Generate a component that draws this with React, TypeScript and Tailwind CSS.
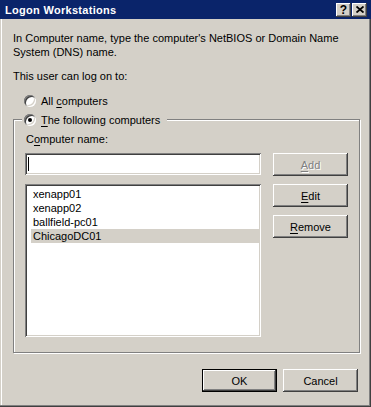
import React from 'react';

const raised =
  'shadow-[inset_-1px_-1px_0_#404040,inset_1px_1px_0_#ffffff,inset_-2px_-2px_0_#808080,inset_2px_2px_0_#d4d0c8]';
const sunken =
  'shadow-[inset_1px_1px_0_#808080,inset_-1px_-1px_0_#ffffff,inset_2px_2px_0_#404040,inset_-2px_-2px_0_#d4d0c8]';

function Radio({ checked }: { checked?: boolean }) {
  return (
    <span
      className={`flex h-[12px] w-[12px] shrink-0 items-center justify-center rounded-full bg-white ${sunken}`}
    >
      {checked && <span className="h-[4px] w-[4px] rounded-full bg-black" />}
    </span>
  );
}

// underlined access key
function Mn({ children }: { children: React.ReactNode }) {
  return <span className="underline underline-offset-[2px]">{children}</span>;
}

function Button({
  children,
  disabled,
  primary,
}: {
  children: React.ReactNode;
  disabled?: boolean;
  primary?: boolean;
}) {
  return (
    <div
      className={`flex h-[23px] w-[75px] items-center justify-center bg-[#d4d0c8] ${raised} ${
        primary ? 'border border-black' : ''
      } ${disabled ? 'text-[#808080] [text-shadow:1px_1px_0_#ffffff]' : 'text-black'}`}
    >
      {children}
    </div>
  );
}

function TitleButton({ children }: { children: React.ReactNode }) {
  return (
    <div className={`flex h-[14px] w-[15px] items-center justify-center bg-[#d4d0c8] ${raised}`}>
      {children}
    </div>
  );
}

const computers = ['xenapp01', 'xenapp02', 'ballfield-pc01', 'ChicagoDC01'];

export default function App() {
  return (
    <div className="flex h-[407px] w-[371px] flex-col bg-[#d4d0c8] font-['Liberation_Sans',Arial,sans-serif] text-[11px] leading-[14px] text-black shadow-[inset_-1px_-1px_0_#404040,inset_-2px_-2px_0_#808080,inset_1px_1px_0_#d4d0c8,inset_2px_2px_0_#ffffff]">
      {/* Title bar */}
      <div className="flex h-[19px] items-center justify-between bg-[#0a246a] pl-[5px] pr-[4px]">
        <span className="font-bold tracking-[0.3px] text-white">Logon Workstations</span>
        <div className="flex gap-[1px]">
          <TitleButton>
            <span className="text-[12px] font-bold leading-none">?</span>
          </TitleButton>
          <TitleButton>
            <svg width="8" height="7" viewBox="0 0 8 7">
              <path d="M0.5 0.5L7.5 6.5M7.5 0.5L0.5 6.5" stroke="#000" strokeWidth="1.8" />
            </svg>
          </TitleButton>
        </div>
      </div>

      <div className="flex flex-col pl-[13px]">
        <p className="mt-[12px] w-[330px]">
          In Computer name, type the computer's NetBIOS or Domain Name System (DNS) name.
        </p>
        <p className="mt-[10px]">This user can log on to:</p>

        <div className="ml-[11px] mt-[11px] flex h-[14px] items-center gap-[5px]">
          <Radio />
          <span>
            All <Mn>c</Mn>omputers
          </span>
        </div>

        {/* Group box */}
        <div className="mt-[11px] flex h-[234px] w-[347px] flex-col border border-[#808080] shadow-[1px_1px_0_#ffffff,inset_1px_1px_0_#ffffff]">
          <div className="-mt-[7px] ml-[8px] flex h-[14px] w-fit items-center gap-[5px] bg-[#d4d0c8] pl-[2px] pr-[7px]">
            <Radio checked />
            <span>
              <Mn>T</Mn>he following computers
            </span>
          </div>

          <div className="flex flex-col px-[11px]">
            <span className="ml-[1px] mt-[5px]">
              C<Mn>o</Mn>mputer name:
            </span>
            <div className="mt-[7px] flex gap-[12px]">
              <div className="flex w-[238px] flex-col gap-[9px]">
                <div className={`flex h-[22px] items-center bg-white pl-[3px] ${sunken}`}>
                  <span className="h-[14px] w-[1px] bg-black" />
                </div>
                <div className={`flex h-[153px] flex-col bg-white px-[2px] py-[2px] ${sunken}`}>
                  <div className="ml-[4px] mt-[1px] flex flex-col">
                    {computers.map((c, i) => (
                      <div
                        key={c}
                        className={`h-[14px] pl-[2px] ${i === computers.length - 1 ? 'bg-[#d4d0c8]' : ''}`}
                      >
                        {c}
                      </div>
                    ))}
                  </div>
                </div>
              </div>
              <div className="flex flex-col">
                <Button disabled>
                  <span>
                    <Mn>A</Mn>dd
                  </span>
                </Button>
                <div className="mt-[8px]">
                  <Button>
                    <span>
                      <Mn>E</Mn>dit
                    </span>
                  </Button>
                </div>
                <div className="mt-[8px]">
                  <Button>
                    <span>
                      <Mn>R</Mn>emove
                    </span>
                  </Button>
                </div>
              </div>
            </div>
          </div>
        </div>

        <div className="mt-[16px] flex justify-end gap-[6px] pr-[13px]">
          <Button primary>OK</Button>
          <Button>Cancel</Button>
        </div>
      </div>
    </div>
  );
}
